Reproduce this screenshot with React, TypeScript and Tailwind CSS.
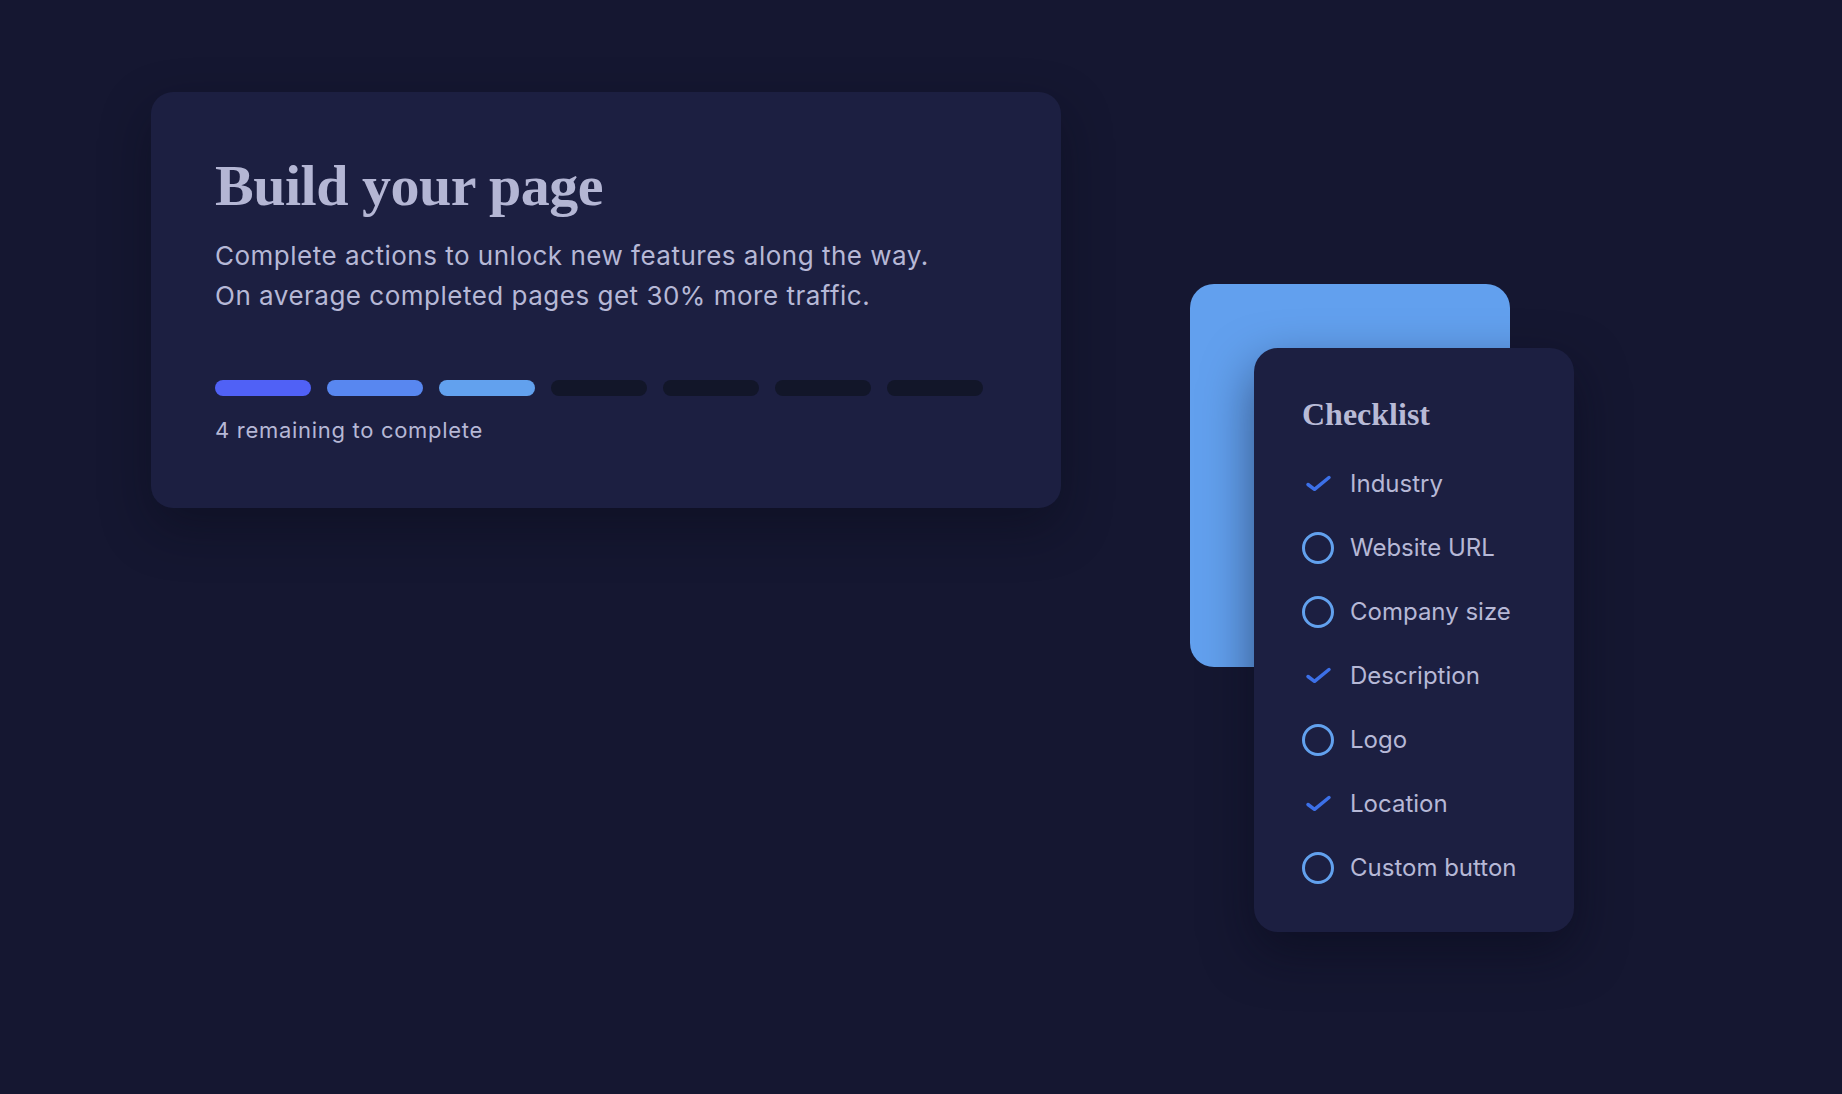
import * as React from "react";

// progress segments: first three done, rest pending
const segments = ["bg-[#5061f6]", "bg-[#5887f0]", "bg-[#62a1ee]", "bg-[#121629]", "bg-[#121629]", "bg-[#121629]", "bg-[#121629]"];

const items: { label: string; done: boolean }[] = [
  { label: "Industry", done: true },
  { label: "Website URL", done: false },
  { label: "Company size", done: false },
  { label: "Description", done: true },
  { label: "Logo", done: false },
  { label: "Location", done: true },
  { label: "Custom button", done: false },
];

function CheckIcon() {
  return (
    <svg width="32" height="32" viewBox="0 0 32 32" fill="none">
      <path d="M6 16.5l6.5 4.8L27 9.5" stroke="#3c70e8" strokeWidth="3.5" strokeLinecap="round" strokeLinejoin="round" />
    </svg>
  );
}

function CircleIcon() {
  return (
    <svg width="32" height="32" viewBox="0 0 32 32" fill="none">
      <circle cx="16" cy="16" r="14.5" stroke="#62a1ee" strokeWidth="3" />
    </svg>
  );
}

export default function App() {
  const serif = { fontFamily: '"Liberation Serif", "Times New Roman", serif' };
  return (
    <div
      className="min-h-[1094px] w-full bg-[#151731] text-[#b6b8d6] flex items-start pl-[151px] pt-[92px]"
      style={{ fontFamily: 'Inter, "Noto Sans", sans-serif' }}
    >
      <div className="w-[910px] rounded-[22px] bg-[#1c1f41] px-16 pt-16 pb-16 shadow-[0_20px_50px_rgba(8,10,25,0.45)]">
        <h1 className="text-[58px] leading-[60px] font-bold tracking-[-0.5px] text-[#b4b6d4]" style={serif}>
          Build your page
        </h1>
        <p className="mt-5 text-[26px] leading-[40px] tracking-[0.5px]">
          Complete actions to unlock new features along the way.
          <br />
          On average completed pages get 30% more traffic.
        </p>
        <div className="mt-16 flex gap-4">
          {segments.map((c, i) => (
            <div key={i} className={"h-4 w-24 rounded-full " + c} />
          ))}
        </div>
        <div className="mt-5 text-[22px] leading-[28px] tracking-[0.7px]">4 remaining to complete</div>
      </div>

      <div className="ml-[129px] mt-[192px] relative">
        <div className="w-[320px] h-[383px] rounded-[24px] bg-[#62a0ee]" />
        <div className="absolute left-16 top-16 w-[320px] rounded-[24px] bg-[#1c1f41] p-12 shadow-[0_20px_50px_rgba(8,10,25,0.5)]">
          <h2 className="text-[32px] leading-[36px] font-bold text-[#b8bad6]" style={serif}>
            Checklist
          </h2>
          <ul className="mt-9 flex flex-col gap-8">
            {items.map((it) => (
              <li key={it.label} className="flex items-center gap-4 h-8">
                {it.done ? <CheckIcon /> : <CircleIcon />}
                <span className="text-[24px] leading-8 whitespace-nowrap">{it.label}</span>
              </li>
            ))}
          </ul>
        </div>
      </div>
    </div>
  );
}
